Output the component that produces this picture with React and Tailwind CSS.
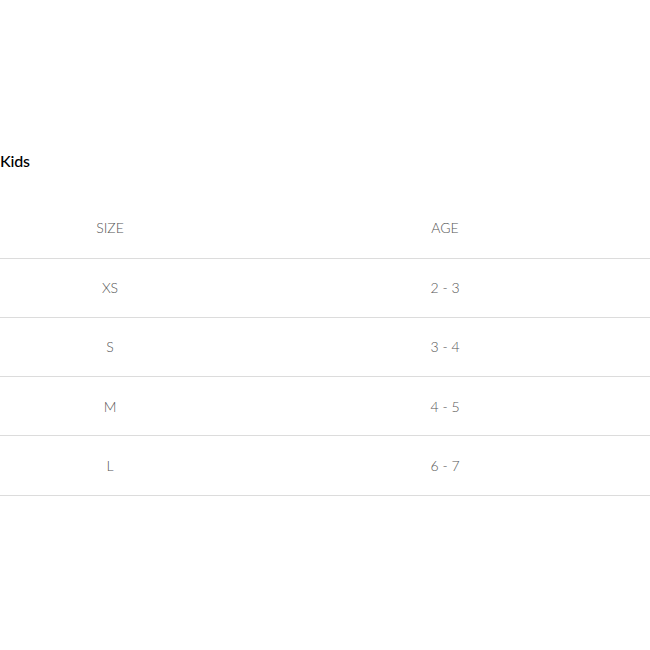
const rows = [
    { size: "XS", age: "2 - 3" },
    { size: "S", age: "3 - 4" },
    { size: "M", age: "4 - 5" },
    { size: "L", age: "6 - 7" },
];

const App = () => {
    return (
        <div className="w-[650px] h-[650px] overflow-hidden bg-white font-['Lato','Liberation_Sans',sans-serif]">
            <div className="pt-[150px]">
                <h2 className="text-[16px] leading-[22px] font-medium text-black tracking-[-0.2px]">Kids</h2>
                <table className="mt-[26px] w-[670px] border-collapse text-[14px] font-light text-[#555]">
                    <thead>
                        <tr className="h-[60px] border-b border-[#dcdcdc]">
                            <th className="w-[220px] font-light text-center">SIZE</th>
                            <th className="w-[450px] font-light text-center">AGE</th>
                        </tr>
                    </thead>
                    <tbody>
                        {rows.map((row) => (
                            <tr key={row.size} className="h-[59.3px] border-b border-[#dcdcdc]">
                                <td className="text-center">{row.size}</td>
                                <td className="text-center">{row.age}</td>
                            </tr>
                        ))}
                    </tbody>
                </table>
            </div>
        </div>
    );
};

export default App;
